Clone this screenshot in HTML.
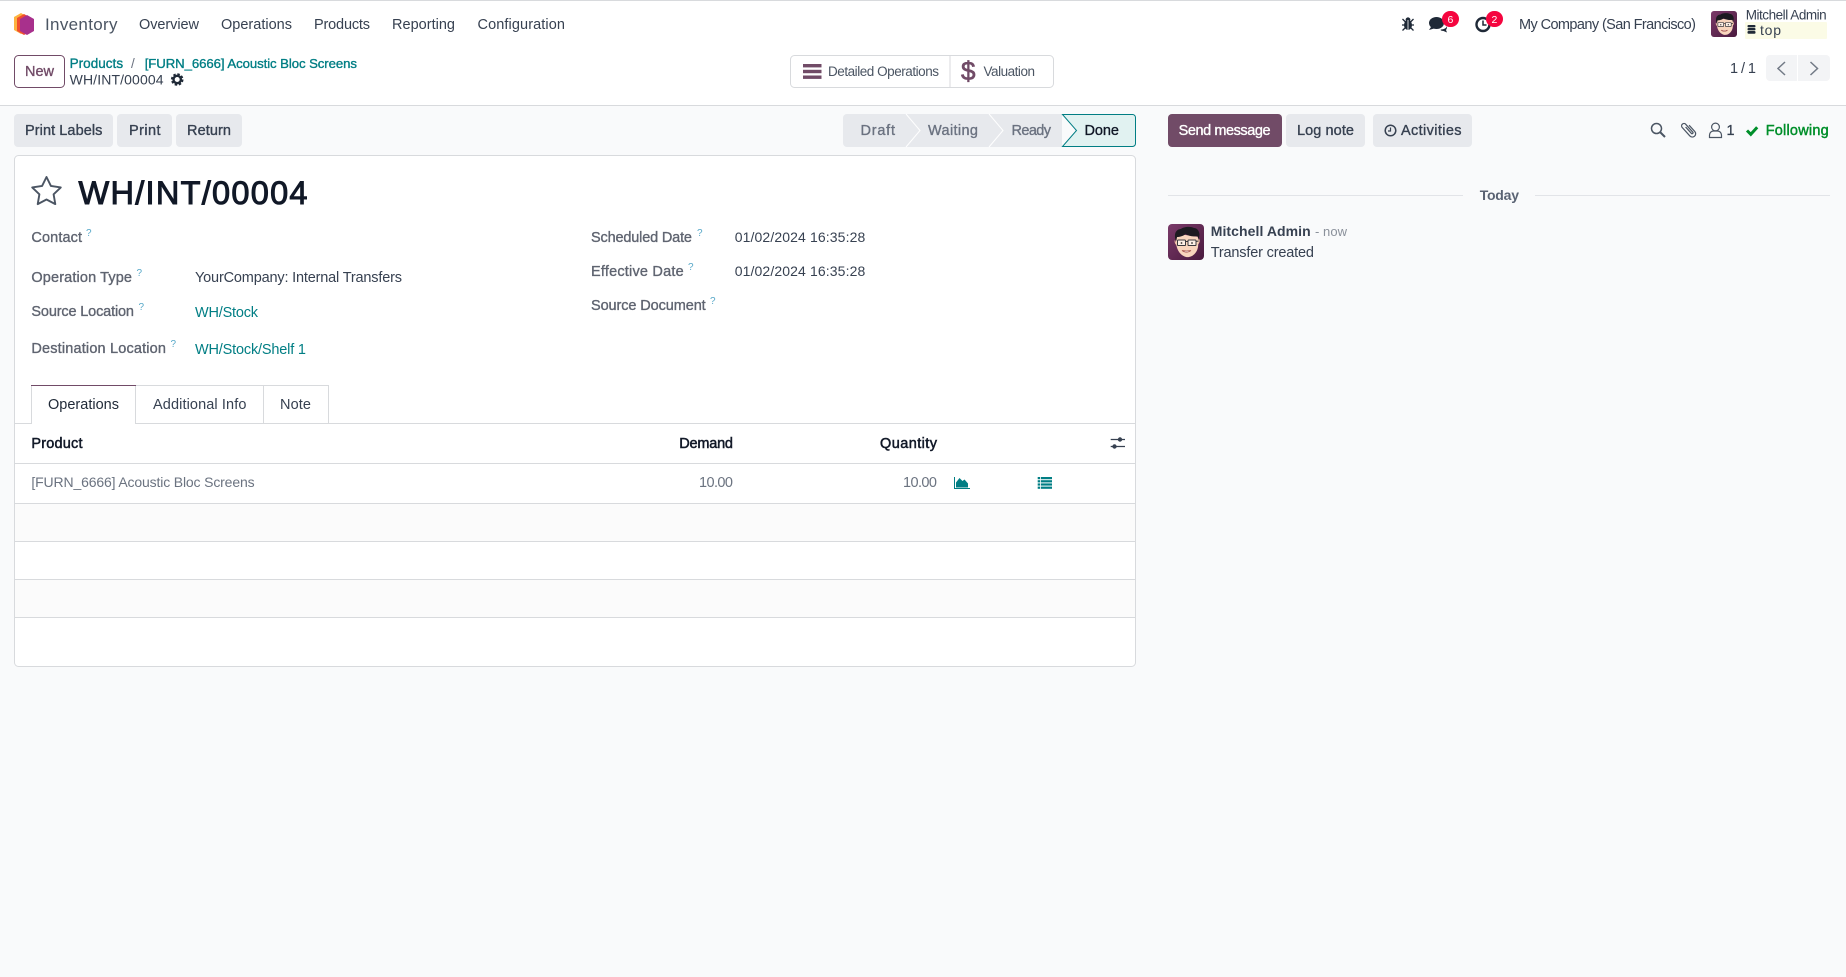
<!DOCTYPE html>
<html lang="en">
<head>
<meta charset="utf-8">
<title>WH/INT/00004 - Inventory</title>
<style>
html,body{margin:0;padding:0;background:#f9fafb;width:1846px;height:977px;overflow:hidden}
svg{display:block}
text{font-family:"Liberation Sans","DejaVu Sans",sans-serif;font-size:14.5px;fill:#374151}
.m{stroke:currentColor;stroke-width:.35px}
.nav{fill:#374151;color:#374151}
.lbl{fill:#5f6470;color:#5f6470;stroke:#5f6470;stroke-width:.35px}
.q{fill:#59a9c9;font-size:10px}
.lnk{fill:#017e84}
.btn{fill:#374151;stroke:#374151;stroke-width:.35px}
.th{fill:#111827;stroke:#111827;stroke-width:.5px}
.mut{fill:#6b7380}
</style>
</head>
<body>
<svg width="1846" height="977" viewBox="0 0 1846 977" xmlns="http://www.w3.org/2000/svg">
<defs>
<linearGradient id="ag" x1="0" y1="0" x2="1" y2="1"><stop offset="0" stop-color="#7a3a69"/><stop offset="1" stop-color="#4a1a3e"/></linearGradient>
<symbol id="av" viewBox="0 0 36 36">
<rect width="36" height="36" rx="4" fill="url(#ag)"/>
<path d="M8 15c-.5 9 3 16 10 18 6 1 11-4 12-10l1-10-20-3z" fill="#f8d5bd"/>
<path d="M7 16c-1 1 0 5 2 5zM31 15c1.500 1 .5 5-1.500 5.500z" fill="#f3c5a6"/>
<path d="M8 17C5 9 9 5 13 5c2-2 9-3 13-1 3 0 5.500 3 5.500 7l-1 5-1-4c-4 1-9 0-12-2-2 2-6 3-8.500 3l-.5 3z" fill="#1c1a20"/>
<rect x="9.500" y="16" width="8" height="5.500" rx=".8" fill="#fdf0e6" stroke="#3a3a3e" stroke-width="1"/>
<rect x="20" y="16" width="8" height="5.500" rx=".8" fill="#fdf0e6" stroke="#3a3a3e" stroke-width="1"/>
<path d="M17.500 17.500h2.500M28 17.500l2.500-.5" stroke="#3a3a3e" stroke-width="1"/>
<circle cx="13.500" cy="19" r=".9" fill="#333"/><circle cx="24" cy="19" r=".9" fill="#333"/>
<path d="M14 26.500c2.500 2.200 6.500 2.200 9 0-2 .5-6.500.6-9 0z" fill="#fff" stroke="#a5504a" stroke-width=".7"/>
</symbol>
</defs>

<rect width="1846" height="977" fill="#f9fafb"/>
<rect width="1846" height="105" fill="#fff"/>
<rect width="1846" height="1" fill="#d8dadd"/>
<rect y="105" width="1846" height="1" fill="#d8dadd"/>

<!-- logo -->
<path d="M21 13l7 4v13l-7 4-7-4V17z" fill="#fdb33f"/>
<path d="M24 14l7 4v13l-7 4-7-4V18z" fill="#f04e2f"/>
<path d="M27 15l7 4v12l-7 4-7-4V19z" fill="#a8308c"/>
<text x="45" y="30" textLength="72.500" style="font-size:17px;fill:#4b5563">Inventory</text>
<text class="nav" x="139" y="29" textLength="60">Overview</text>
<text class="nav" x="221" y="29" textLength="71">Operations</text>
<text class="nav" x="314" y="29" textLength="56">Products</text>
<text class="nav" x="392" y="29" textLength="63">Reporting</text>
<text class="nav" x="477.500" y="29" textLength="87.500">Configuration</text>

<!-- systray -->
<g fill="#1f2937">
<ellipse cx="1408" cy="25" rx="4" ry="5"/>
<circle cx="1408" cy="19.800" r="2.400"/>
<path d="M1402.500 19l3 3M1413.500 19l-3 3M1402 25h12M1402.500 30.500l3-3M1413.500 30.500l-3-3" stroke="#1f2937" stroke-width="1.300" fill="none"/>
<path d="M1408 20v10" stroke="#fff" stroke-width=".8"/>
<ellipse cx="1436.500" cy="23" rx="7.500" ry="6"/>
<path d="M1431 27l-2 3 5-1.500z"/>
<path d="M1441 29.500c3 0 5.500-1.500 6-3.500v1c0 1.500-.5 2-1 3l1 2.500-3.500-1.500c-1.500 0-2.500-.5-3-1z"/>
</g>
<rect x="1442" y="11" width="17" height="16" rx="8" fill="#f5053f"/>
<text x="1447.500" y="23" textLength="6" style="font-size:10.500px;fill:#fff">6</text>
<circle cx="1483" cy="24.500" r="6.500" fill="none" stroke="#1f2937" stroke-width="2.400"/>
<path d="M1483 20.500v4.500h3.500" fill="none" stroke="#1f2937" stroke-width="1.500"/>
<rect x="1486" y="11" width="17" height="16" rx="8" fill="#f5053f"/>
<text x="1491.500" y="23" textLength="6" style="font-size:10.500px;fill:#fff">2</text>
<text class="nav" x="1519" y="29" textLength="177">My Company (San Francisco)</text>
<use href="#av" x="1711" y="11" width="26" height="26"/>
<text class="nav" x="1745.700" y="19.500" textLength="81" style="font-size:13.500px">Mitchell Admin</text>
<rect x="1745" y="22" width="82" height="17" rx="1" fill="#fbfbe6"/>
<g fill="#1f2937"><rect x="1747.500" y="25" width="8" height="2.400" rx="1"/><rect x="1747.500" y="28" width="8" height="2.400" rx="1"/><rect x="1747.500" y="31" width="8" height="2.700" rx="1"/></g>
<text class="nav" x="1760" y="35" textLength="21" style="font-size:14px">top</text>

<!-- control panel -->
<rect x="14.500" y="55.500" width="50" height="32" rx="4" fill="#fff" stroke="#714b67"/>
<text class="m" x="25" y="76" textLength="29" style="fill:#714b67;color:#714b67">New</text>
<text class="lnk m" x="69.600" y="68" textLength="53.500" style="font-size:13.500px;color:#017e84">Products</text>
<text x="131" y="68" textLength="6" style="fill:#6b7280;font-size:13.500px">/</text>
<text class="lnk m" x="144.700" y="68" textLength="212.300" style="font-size:13.200px;color:#017e84">[FURN_6666] Acoustic Bloc Screens</text>
<text x="69.600" y="84.500" textLength="94" style="font-size:14px">WH/INT/00004</text>
<circle cx="177.200" cy="79.500" r="3.700" fill="none" stroke="#1f2937" stroke-width="2.400"/>
<circle cx="177.200" cy="79.500" r="5.400" fill="none" stroke="#1f2937" stroke-width="1.800" stroke-dasharray="2.500 1.740"/>

<rect x="790.500" y="55.500" width="263" height="32" rx="4" fill="#fff" stroke="#d8dadd"/>
<rect x="949.500" y="56" width="1" height="31" fill="#d8dadd"/>
<g fill="#714b67"><rect x="803" y="64" width="18.500" height="3.400"/><rect x="803" y="69.800" width="18.500" height="3.400"/><rect x="803" y="75.500" width="18.500" height="3.400"/></g>
<text x="828" y="76" textLength="111" style="font-size:13.500px;fill:#4b5563">Detailed Operations</text>
<text x="961" y="80" textLength="13" style="font-size:26px;fill:#714b67;stroke:#714b67;stroke-width:.7px">$</text>
<text x="983.500" y="76" textLength="51.500" style="font-size:13.500px;fill:#4b5563">Valuation</text>

<path d="M1766 59a4 4 0 0 1 4-4h27v26h-27a4 4 0 0 1-4-4z" fill="#f3f4f6"/>
<path d="M1798 55h28a4 4 0 0 1 4 4v18a4 4 0 0 1-4 4h-28z" fill="#f3f4f6"/>
<path d="M1785 62l-7 6.500 7 6.500M1810.500 62l7 6.500-7 6.500" fill="none" stroke="#727a86" stroke-width="1.500"/>
<text class="nav" x="1730" y="73" textLength="26">1 / 1</text>

<!-- action row -->
<rect x="14" y="114" width="99" height="33" rx="4" fill="#e7e9ed"/>
<rect x="117" y="114" width="55" height="33" rx="4" fill="#e7e9ed"/>
<rect x="176" y="114" width="66" height="33" rx="4" fill="#e7e9ed"/>
<text class="btn" x="25" y="135" textLength="77.400">Print Labels</text>
<text class="btn" x="129" y="135" textLength="31.500">Print</text>
<text class="btn" x="187" y="135" textLength="44">Return</text>

<!-- statusbar -->
<path d="M847 114h215v33H847a4 4 0 0 1-4-4v-25a4 4 0 0 1 4-4z" fill="#e7e9ed"/>
<path d="M906 114l14 16.500-14 16.500M989 114l14 16.500-14 16.500" fill="none" stroke="#fff" stroke-width="1"/>
<path d="M1062.500 114.500h70a3 3 0 0 1 3 3v26a3 3 0 0 1-3 3h-70l14-16z" fill="#e1f2f1" stroke="#017e84"/>
<text class="m" x="860.500" y="135" textLength="34.500" style="fill:#6b7280;color:#6b7280">Draft</text>
<text class="m" x="928" y="135" textLength="50" style="fill:#6b7280;color:#6b7280">Waiting</text>
<text class="m" x="1011.500" y="135" textLength="39.500" style="fill:#6b7280;color:#6b7280">Ready</text>
<text class="m" x="1084.500" y="135" textLength="34.500" style="fill:#111827;color:#111827">Done</text>

<!-- chatter buttons -->
<rect x="1168" y="114" width="114" height="33" rx="4" fill="#714b67"/>
<text class="m" x="1178.600" y="135" textLength="92" style="fill:#fff;color:#fff">Send message</text>
<rect x="1286" y="114" width="79" height="33" rx="4" fill="#e7e9ed"/>
<text class="btn" x="1297" y="135" textLength="57">Log note</text>
<rect x="1373" y="114" width="99" height="33" rx="4" fill="#e7e9ed"/>
<circle cx="1390.500" cy="130.500" r="5.300" fill="none" stroke="#374151" stroke-width="1.500"/>
<path d="M1390.500 127.500v3.500h-2.500" fill="none" stroke="#374151" stroke-width="1.200"/>
<text class="btn" x="1401" y="135" textLength="60.500">Activities</text>

<g fill="none" stroke="#4b5563" stroke-width="1.500">
<circle cx="1656.500" cy="128.500" r="5"/><path d="M1660 132l5 5" stroke-width="2"/>
<path d="M3.500-3V6a3.500 3.500 0 0 1-7 0V-6a2.500 2.500 0 0 1 5 0V5a1 1 0 0 1-2 0V-4" transform="translate(1688.500 129.500) rotate(-42) scale(.95)" stroke-width="1.300"/>
<circle cx="1715.500" cy="127" r="3.900" stroke-width="1.200"/>
<path d="M1709.500 137.500v-2.500a4 4 0 0 1 4-4h4a4 4 0 0 1 4 4v2.500z" stroke-width="1.200"/>
</g>
<text x="1726.500" y="135" textLength="6" style="fill:#374151;stroke:#374151;stroke-width:.3px">1</text>
<path d="M1747 130.500l3.800 3.800 6.400-7" fill="none" stroke="#008f2a" stroke-width="3"/>
<text class="m" x="1765.700" y="135" textLength="63" style="fill:#008f2a;color:#008f2a;stroke-width:.45px">Following</text>

<!-- sheet -->
<rect x="14.500" y="155.500" width="1121" height="511" rx="4" fill="#fff" stroke="#d8dadd"/>
<path d="M46.500 177l4.400 8.900 9.900 1.500-7.200 6.900 1.700 9.800-8.800-4.600-8.800 4.600 1.700-9.800-7.200-6.900 9.900-1.500z" fill="none" stroke="#4b5563" stroke-width="1.900" stroke-linejoin="round"/>
<text x="78.500" y="204" textLength="229" style="font-size:32.500px;fill:#111827;stroke:#111827;stroke-width:1px">WH/INT/00004</text>

<text class="lbl" x="31.400" y="242" textLength="50.600">Contact</text><text class="q" x="86" y="236">?</text>
<text class="lbl" x="31.400" y="282" textLength="100.600">Operation Type</text><text class="q" x="136.500" y="276">?</text>
<text x="195" y="282" textLength="207" style="fill:#374151">YourCompany: Internal Transfers</text>
<text class="lbl" x="31.400" y="316" textLength="102.600">Source Location</text><text class="q" x="138.500" y="310">?</text>
<text class="lnk" x="195" y="317" textLength="63">WH/Stock</text>
<text class="lbl" x="31.400" y="353" textLength="134.600">Destination Location</text><text class="q" x="170.500" y="347">?</text>
<text class="lnk" x="195" y="354" textLength="111">WH/Stock/Shelf 1</text>

<text class="lbl" x="591" y="242" textLength="101">Scheduled Date</text><text class="q" x="697" y="236">?</text>
<text x="734.700" y="242" textLength="130.600" style="font-size:14px">01/02/2024 16:35:28</text>
<text class="lbl" x="591" y="276" textLength="92.700">Effective Date</text><text class="q" x="688" y="270">?</text>
<text x="734.700" y="276" textLength="130.600" style="font-size:14px">01/02/2024 16:35:28</text>
<text class="lbl" x="591" y="310" textLength="114.700">Source Document</text><text class="q" x="710" y="304">?</text>

<!-- tabs -->
<rect x="15" y="423" width="1120" height="1" fill="#d8dadd"/>
<path d="M135.500 385.500h128v38M263.500 385.500h65v38" fill="none" stroke="#d8dadd"/>
<rect x="31.500" y="386" width="104" height="38" fill="#fff"/>
<path d="M31.500 424v-38M135.500 424v-38" fill="none" stroke="#d8dadd"/>
<rect x="31" y="385" width="105" height="1" fill="#714b67"/>
<text x="48" y="409" textLength="71" style="fill:#1f2937">Operations</text>
<text x="153" y="409" textLength="93.400">Additional Info</text>
<text x="280" y="409" textLength="31">Note</text>

<!-- table -->
<text class="th" x="31.400" y="448" textLength="51.100">Product</text>
<text class="th" x="679.300" y="448" textLength="53.700">Demand</text>
<text class="th" x="880" y="448" textLength="57">Quantity</text>
<path d="M1110.700 439.500h14.300M1110.700 446.500h14.300" stroke="#374151" stroke-width="1.300"/>
<circle cx="1120" cy="439.500" r="2.200" fill="#374151"/><circle cx="1114.500" cy="446.500" r="2.200" fill="#374151"/>
<rect x="15" y="463" width="1120" height="1" fill="#d8dadd"/>
<text class="mut" x="31.400" y="487" textLength="223.200" style="font-size:14px">[FURN_6666] Acoustic Bloc Screens</text>
<text class="mut" x="699" y="487" textLength="34">10.00</text>
<text class="mut" x="903" y="487" textLength="34">10.00</text>
<path d="M954.500 477v11.500H970" fill="none" stroke="#017e84" stroke-width="1"/>
<path d="M956 487.500v-5l3.500-4.500 3 3 2-1.500 3.500 4v4z" fill="#017e84"/>
<g fill="#017e84"><rect x="1037.700" y="477" width="2.500" height="2.200"/><rect x="1041" y="477" width="11" height="2.200"/><rect x="1037.700" y="480.200" width="2.500" height="2.200"/><rect x="1041" y="480.200" width="11" height="2.200"/><rect x="1037.700" y="483.400" width="2.500" height="2.200"/><rect x="1041" y="483.400" width="11" height="2.200"/><rect x="1037.700" y="486.600" width="2.500" height="2.200"/><rect x="1041" y="486.600" width="11" height="2.200"/></g>
<rect x="15" y="503" width="1120" height="1" fill="#d8dadd"/>
<rect x="15" y="504" width="1120" height="37" fill="#fbfbfb"/>
<rect x="15" y="541" width="1120" height="1" fill="#d8dadd"/>
<rect x="15" y="579" width="1120" height="1" fill="#d8dadd"/>
<rect x="15" y="580" width="1120" height="37" fill="#fbfbfb"/>
<rect x="15" y="617" width="1120" height="1" fill="#d8dadd"/>

<!-- chatter -->
<rect x="1168" y="195" width="295" height="1" fill="#e2e4e8"/>
<rect x="1535" y="195" width="295" height="1" fill="#e2e4e8"/>
<text x="1479.700" y="200" textLength="39.300" style="font-size:14px;font-weight:700;fill:#5a6373">Today</text>
<use href="#av" x="1168" y="224" width="36" height="36"/>
<text x="1210.700" y="236" textLength="100" style="font-size:14px;font-weight:700;fill:#374151">Mitchell Admin</text>
<text x="1315" y="236" textLength="32" style="font-size:13px;fill:#8b919b">- now</text>
<text x="1210.700" y="257" textLength="103.300" style="fill:#374151">Transfer created</text>
</svg>
</body>
</html>
